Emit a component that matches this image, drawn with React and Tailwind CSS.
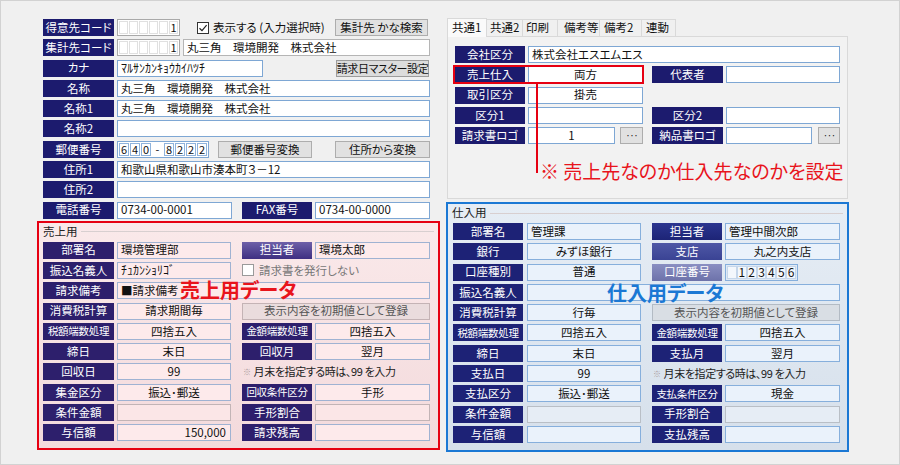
import React from "react";

const navy = "bg-[#1c1b6e]";
const purple = "bg-[#2d1f6c]";
const purpleGrad = "bg-gradient-to-b from-[#6e5fa8] to-[#3f2f82]";
const bNavy = "bg-[#1d2276]";
const bNavyGrad = "bg-gradient-to-b from-[#2b3590] to-[#1d2476]";
const bMidGrad = "bg-gradient-to-b from-[#4f58a6] to-[#3a4394]";
const bLightGrad = "bg-gradient-to-b from-[#8a8fc2] to-[#6d72aa]";

const pinkField = "bg-[#fdeaeb] border-[#9fb2d2]";
const pinkGray = "bg-[#fbe6e7] border-[#c2b4b6]";
const blueField = "bg-[#eaf2fb] border-[#86afdc]";
const blueGray = "bg-[#e6edf5] border-[#b9bfc6]";

function Label({ t, c = navy, w = "w-[71px]", ml = "", sm = false }) {
  return (
    <div
      className={`${w} ${ml} h-[17px] shrink-0 flex items-center justify-center text-white leading-none whitespace-nowrap ${
        sm ? "text-[10.5px] tracking-[-0.3px]" : "text-[11.5px]"
      } ${c}`}
    >
      {t}
    </div>
  );
}

function Field({ t = "", w, ml = "", align = "l", c = "bg-white border-[#7ea7d4]", size = "text-[11.5px]" }) {
  const a =
    align === "c"
      ? "justify-center"
      : align === "r"
      ? "justify-end pr-[4px]"
      : "justify-start pl-[3px]";
  return (
    <div
      className={`${w} ${ml} h-[17px] shrink-0 border flex items-center leading-none text-[#111] whitespace-nowrap ${size} ${a} ${c}`}
    >
      {t}
    </div>
  );
}

function Btn({ t, w, ml = "", c = "bg-[#e1e1e1] border-[#adadad] text-[#111]", size = "text-[11.5px]" }) {
  return (
    <div
      className={`${w} ${ml} h-[17px] shrink-0 border flex items-center justify-center leading-none whitespace-nowrap ${size} ${c}`}
    >
      {t}
    </div>
  );
}

function Row({ children }) {
  return <div className="flex items-center h-[17px]">{children}</div>;
}

function CodeBox({ ml = "" }) {
  return (
    <div className={`w-[63px] h-[17px] shrink-0 border border-[#a9a9a9] bg-white flex p-[1px] gap-[1px] ${ml}`}>
      {[0, 1, 2, 3, 4].map((i) => (
        <div key={i} className="flex-1 border border-[#e0e0e0]" />
      ))}
      <div className="flex-1 border border-[#e0e0e0] flex items-center justify-center text-[11px] leading-none">
        1
      </div>
    </div>
  );
}

function Digit({ d, c = "bg-white border-[#8fb3dc]", size = "text-[11px]" }) {
  return (
    <div className={`w-[10px] h-[13px] border flex items-center justify-center leading-none ${size} ${c}`}>
      {d}
    </div>
  );
}

function Check({ gray = false }) {
  return (
    <div
      className={`w-[12px] h-[12px] border bg-white flex items-center justify-center ${
        gray ? "border-[#9a9a9a]" : "border-[#333]"
      }`}
    >
      {!gray && (
        <svg width="10" height="10" viewBox="0 0 10 10">
          <path d="M1.5 5.2 L4 7.6 L8.6 2.2" fill="none" stroke="#222" strokeWidth="1.2" />
        </svg>
      )}
    </div>
  );
}

function Note() {
  return (
    <div className="ml-[12px] flex items-center text-[11px] tracking-[-0.4px] leading-none text-[#222] whitespace-nowrap">
      <span className="text-[8px] text-[#a89a9a] mr-[3px]">※</span>
      月末を指定する時は、99 を入力
    </div>
  );
}

function GroupTitle({ t }) {
  return (
    <div className="h-[16px] mt-[1px] flex items-center pl-[4px] text-[11.5px] leading-none text-[#222]">
      <span>{t}</span>
      <div className="flex-1 h-px bg-[#d8cfd0] ml-[3px] mr-[4px]" />
    </div>
  );
}

export default function App() {
  return (
    <div className="w-[900px] h-[465px] bg-[#f0f0f0] border border-[#d2d2d2] flex items-start font-['Noto_Sans_CJK_JP','Noto_Sans',sans-serif] [font-feature-settings:'palt'] text-[#111] overflow-hidden">
      {/* left column */}
      <div className="ml-[36px] w-[403px] flex flex-col">
        <div className="mt-[18px] ml-[6px] w-[387px] flex flex-col gap-[3.3px]">
          <Row>
            <Label t="得意先コード" />
            <CodeBox ml="ml-[3px]" />
            <div className="ml-[17px] flex items-center gap-[4px] text-[11.5px] leading-none">
              <Check />
              <span>表示する (入力選択時)</span>
            </div>
            <Btn t="集計先 かな検索" w="w-[93px]" ml="ml-auto mr-[2px]" />
          </Row>
          <Row>
            <Label t="集計先コード" />
            <CodeBox ml="ml-[3px]" />
            <Field t="丸三角　環境開発　株式会社" w="w-[247px]" ml="ml-[3px]" c="bg-white border-[#b5b5b5]" />
          </Row>
          <Row>
            <Label t="カナ" />
            <Field t="ﾏﾙｻﾝｶﾝｷｮｳｶｲﾊﾂﾁ" w="w-[146px]" ml="ml-[3px]" size="text-[12px]" />
            <Btn
              t="請求日マスター設定"
              w="w-[93px]"
              ml="ml-auto mr-[1px]"
              c="bg-[#dcdcdc] border-[#9c9c9c] text-[#111] tracking-[-0.4px]"
              size="text-[11px]"
            />
          </Row>
          <Row>
            <Label t="名称" />
            <Field t="丸三角　環境開発　株式会社" w="w-[313px]" ml="ml-[3px]" />
          </Row>
          <Row>
            <Label t="名称1" />
            <Field t="丸三角　環境開発　株式会社" w="w-[313px]" ml="ml-[3px]" />
          </Row>
          <Row>
            <Label t="名称2" />
            <Field w="w-[313px]" ml="ml-[3px]" />
          </Row>
          <Row>
            <Label t="郵便番号" />
            <div className="ml-[3px] w-[92px] h-[17px] shrink-0 border border-[#7ea7d4] bg-white flex items-center px-[1px] gap-[1px]">
              <Digit d="6" />
              <Digit d="4" />
              <Digit d="0" />
              <div className="w-[11px] text-center text-[11px] leading-none">-</div>
              <Digit d="8" />
              <Digit d="2" />
              <Digit d="2" />
              <Digit d="2" />
            </div>
            <Btn t="郵便番号変換" w="w-[94px]" ml="ml-[9px]" />
            <Btn t="住所から変換" w="w-[95px]" ml="ml-auto" />
          </Row>
          <Row>
            <Label t="住所1" />
            <Field t="和歌山県和歌山市湊本町３－12" w="w-[313px]" ml="ml-[3px]" />
          </Row>
          <Row>
            <Label t="住所2" />
            <Field w="w-[313px]" ml="ml-[3px]" />
          </Row>
          <Row>
            <Label t="電話番号" />
            <Field t="0734-00-0001" w="w-[115px]" ml="ml-[3px]" />
            <Label t="FAX番号" w="w-[70px]" ml="ml-[10px]" />
            <Field t="0734-00-0000" w="w-[115px]" ml="ml-[3px]" />
          </Row>
        </div>

        {/* 売上用 */}
        <div className="relative mt-[2px] h-[229px] border-2 border-[#e60012] bg-gradient-to-b from-[#fae9ea] to-[#f3dadc]">
          <GroupTitle t="売上用" />
          <div className="mt-[2px] pl-[4px] flex flex-col gap-[3.3px]">
            <Row>
              <Label t="部署名" c={purple} />
              <Field t="環境管理部" w="w-[114px]" ml="ml-[3px]" c={pinkField} />
              <Label t="担当者" w="w-[70px]" ml="ml-[11px]" c={purpleGrad} />
              <Field t="環境太郎" w="w-[115px]" ml="ml-[3px]" c={pinkField} />
            </Row>
            <Row>
              <Label t="振込名義人" c={purple} />
              <Field t="ﾁｭｶﾝｼｮﾘｺﾞ" w="w-[114px]" ml="ml-[3px]" c={pinkField} size="text-[12px]" />
              <div className="ml-[11px] flex items-center gap-[5px] text-[11.5px] leading-none text-[#777]">
                <Check gray />
                <span>請求書を発行しない</span>
              </div>
            </Row>
            <Row>
              <Label t="請求備考" c={purple} />
              <Field t="■請求備考" w="w-[313px]" ml="ml-[3px]" c={pinkField} />
            </Row>
            <Row>
              <Label t="消費税計算" c={purple} />
              <Field t="請求期間毎" align="c" w="w-[114px]" ml="ml-[3px]" c={pinkField} />
              <Btn
                t="表示内容を初期値として登録"
                w="w-[188px]"
                ml="ml-[11px]"
                c="bg-[#eadcdd] border-[#c4b3b5] text-[#555]"
              />
            </Row>
            <Row>
              <Label t="税額端数処理" c={purple} sm />
              <Field t="四捨五入" align="c" w="w-[114px]" ml="ml-[3px]" c={pinkField} />
              <Label t="金額端数処理" w="w-[70px]" ml="ml-[11px]" c={purple} sm />
              <Field t="四捨五入" align="c" w="w-[115px]" ml="ml-[3px]" c={pinkField} />
            </Row>
            <Row>
              <Label t="締日" c={purple} />
              <Field t="末日" align="c" w="w-[114px]" ml="ml-[3px]" c={pinkField} />
              <Label t="回収月" w="w-[70px]" ml="ml-[11px]" c={purple} />
              <Field t="翌月" align="c" w="w-[115px]" ml="ml-[3px]" c={pinkField} />
            </Row>
            <Row>
              <Label t="回収日" c={purple} />
              <Field t="99" align="c" w="w-[114px]" ml="ml-[3px]" c={pinkField} />
              <Note />
            </Row>
            <Row>
              <Label t="集金区分" c={purple} />
              <Field t="振込･郵送" align="c" w="w-[114px]" ml="ml-[3px]" c={pinkField} />
              <Label t="回収条件区分" w="w-[70px]" ml="ml-[11px]" c={purple} sm />
              <Field t="手形" align="c" w="w-[115px]" ml="ml-[3px]" c={pinkField} />
            </Row>
            <Row>
              <Label t="条件金額" c={purple} />
              <Field w="w-[114px]" ml="ml-[3px]" c={pinkGray} />
              <Label t="手形割合" w="w-[70px]" ml="ml-[11px]" c={purple} />
              <Field w="w-[115px]" ml="ml-[3px]" c={pinkGray} />
            </Row>
            <Row>
              <Label t="与信額" c={purple} />
              <Field t="150,000" align="r" w="w-[114px]" ml="ml-[3px]" c={pinkField} />
              <Label t="請求残高" w="w-[70px]" ml="ml-[11px]" c={purple} />
              <Field w="w-[115px]" ml="ml-[3px]" c={pinkField} />
            </Row>
          </div>
          <div className="absolute left-[141px] top-[57px] text-[20px] font-bold leading-none text-[#e8141c]">
            売上用データ
          </div>
        </div>
      </div>

      {/* right column */}
      <div className="ml-[6px] w-[403px] flex flex-col">
        <div className="mt-[16px] ml-[1px] h-[19px] flex items-end text-[11.5px] leading-none">
          <div className="w-[40px] h-[19px] bg-[#fafafa] border border-b-0 border-[#d9d9d9] flex items-center pl-[4px] relative z-10 -mb-px">
            共通1
          </div>
          <div className="w-[36px] h-[17px] border border-l-0 border-b-0 border-[#d9d9d9] flex items-center pl-[3px]">
            共通2
          </div>
          <div className="w-[35px] h-[17px] border border-l-0 border-b-0 border-[#d9d9d9] flex items-center pl-[3px]">
            印刷
          </div>
          <div className="w-[42px] h-[17px] border border-l-0 border-b-0 border-[#d9d9d9] flex items-center pl-[6px]">
            備考等
          </div>
          <div className="w-[42px] h-[17px] border border-l-0 border-b-0 border-[#d9d9d9] flex items-center pl-[4px]">
            備考2
          </div>
          <div className="w-[34px] h-[17px] border border-l-0 border-b-0 border-[#d9d9d9] flex items-center pl-[4px]">
            連動
          </div>
        </div>
        <div className="relative mx-[1px] h-[163px] border border-[#d9d9d9] bg-[#f2f2f2] pt-[9px] pl-[7px]">
          <div className="flex flex-col gap-[3.3px]">
            <Row>
              <Label t="会社区分" w="w-[70px]" />
              <Field t="株式会社エスエムエス" w="w-[312px]" ml="ml-[3px]" />
            </Row>
            <Row>
              <Label t="売上仕入" w="w-[70px]" />
              <Field t="両方" align="c" w="w-[115px]" ml="ml-[3px]" />
              <Label t="代表者" ml="ml-[9px]" />
              <Field w="w-[114px]" ml="ml-[3px]" />
            </Row>
            <Row>
              <Label t="取引区分" w="w-[70px]" />
              <Field t="掛売" align="c" w="w-[115px]" ml="ml-[3px]" />
            </Row>
            <Row>
              <Label t="区分1" w="w-[70px]" />
              <Field w="w-[115px]" ml="ml-[3px]" />
              <Label t="区分2" ml="ml-[9px]" />
              <Field w="w-[114px]" ml="ml-[3px]" />
            </Row>
            <Row>
              <Label t="請求書ロゴ" w="w-[70px]" />
              <Field t="1" align="c" w="w-[87px]" ml="ml-[3px]" />
              <Btn t="···" w="w-[23px]" ml="ml-[5px]" size="text-[9px] tracking-[-1px]" />
              <Label t="納品書ロゴ" ml="ml-[9px]" />
              <Field w="w-[86px]" ml="ml-[3px]" />
              <Btn t="···" w="w-[22px]" ml="ml-[6px]" size="text-[9px] tracking-[-1px]" />
            </Row>
          </div>
          <div className="mt-[17px] ml-[85px] text-[19px] leading-none text-[#e8141c] whitespace-nowrap">
            ※ 売上先なのか仕入先なのかを設定
          </div>
          <div className="absolute left-[5px] top-[28px] w-[191px] h-[19px] border-2 border-[#e60012]" />
          <div className="absolute left-[88px] top-[47px] w-[2px] h-[89px] bg-[#e60012]" />
        </div>

        {/* 仕入用 */}
        <div className="relative mt-[3px] h-[250px] border-2 border-[#1b78d4] bg-gradient-to-b from-[#e6edf5] to-[#d6e0eb]">
          <GroupTitle t="仕入用" />
          <div className="mt-[2px] pl-[5px] flex flex-col gap-[3.3px]">
            <Row>
              <Label t="部署名" w="w-[70px]" c={bNavy} />
              <Field t="管理課" w="w-[114px]" ml="ml-[4px]" c={blueField} />
              <Label t="担当者" w="w-[70px]" ml="ml-[11px]" c={bNavyGrad} />
              <Field t="管理中間次郎" w="w-[115px]" ml="ml-[3px]" c={blueField} />
            </Row>
            <Row>
              <Label t="銀行" w="w-[70px]" c={bNavy} />
              <Field t="みずほ銀行" align="c" w="w-[114px]" ml="ml-[4px]" c={blueField} />
              <Label t="支店" w="w-[70px]" ml="ml-[11px]" c={bMidGrad} />
              <Field t="丸之内支店" align="c" w="w-[115px]" ml="ml-[3px]" c={blueField} />
            </Row>
            <Row>
              <Label t="口座種別" w="w-[70px]" c={bNavy} />
              <Field t="普通" align="c" w="w-[114px]" ml="ml-[4px]" c={blueField} />
              <Label t="口座番号" w="w-[70px]" ml="ml-[11px]" c={bLightGrad} />
              <div className="ml-[3px] w-[73px] h-[17px] shrink-0 border border-[#86afdc] bg-[#dfe9f5] flex items-center px-[1px]">
                <Digit d="" c="bg-[#f3f7fc] border-[#c5d6ea]" size="text-[12px]" />
                <Digit d="1" c="bg-[#f3f7fc] border-[#c5d6ea]" size="text-[12px]" />
                <Digit d="2" c="bg-[#f3f7fc] border-[#c5d6ea]" size="text-[12px]" />
                <Digit d="3" c="bg-[#f3f7fc] border-[#c5d6ea]" size="text-[12px]" />
                <Digit d="4" c="bg-[#f3f7fc] border-[#c5d6ea]" size="text-[12px]" />
                <Digit d="5" c="bg-[#f3f7fc] border-[#c5d6ea]" size="text-[12px]" />
                <Digit d="6" c="bg-[#f3f7fc] border-[#c5d6ea]" size="text-[12px]" />
              </div>
            </Row>
            <Row>
              <Label t="振込名義人" w="w-[70px]" c={bNavy} />
              <Field w="w-[313px]" ml="ml-[4px]" c={blueField} />
            </Row>
            <Row>
              <Label t="消費税計算" w="w-[70px]" c={bNavy} />
              <Field t="行毎" align="c" w="w-[114px]" ml="ml-[4px]" c={blueField} />
              <Btn
                t="表示内容を初期値として登録"
                w="w-[188px]"
                ml="ml-[11px]"
                c="bg-[#d9dee4] border-[#b3bbc4] text-[#555]"
              />
            </Row>
            <Row>
              <Label t="税額端数処理" w="w-[70px]" c={bNavy} sm />
              <Field t="四捨五入" align="c" w="w-[114px]" ml="ml-[4px]" c={blueField} />
              <Label t="金額端数処理" w="w-[70px]" ml="ml-[11px]" c={bNavy} sm />
              <Field t="四捨五入" align="c" w="w-[115px]" ml="ml-[3px]" c={blueField} />
            </Row>
            <Row>
              <Label t="締日" w="w-[70px]" c={bNavy} />
              <Field t="末日" align="c" w="w-[114px]" ml="ml-[4px]" c={blueField} />
              <Label t="支払月" w="w-[70px]" ml="ml-[11px]" c={bNavy} />
              <Field t="翌月" align="c" w="w-[115px]" ml="ml-[3px]" c={blueField} />
            </Row>
            <Row>
              <Label t="支払日" w="w-[70px]" c={bNavy} />
              <Field t="99" align="c" w="w-[114px]" ml="ml-[4px]" c={blueField} />
              <Note />
            </Row>
            <Row>
              <Label t="支払区分" w="w-[70px]" c={bNavy} />
              <Field t="振込･郵送" align="c" w="w-[114px]" ml="ml-[4px]" c={blueField} />
              <Label t="支払条件区分" w="w-[70px]" ml="ml-[11px]" c={bNavy} sm />
              <Field t="現金" align="c" w="w-[115px]" ml="ml-[3px]" c={blueField} />
            </Row>
            <Row>
              <Label t="条件金額" w="w-[70px]" c={bNavy} />
              <Field w="w-[114px]" ml="ml-[4px]" c={blueGray} />
              <Label t="手形割合" w="w-[70px]" ml="ml-[11px]" c={bNavy} />
              <Field w="w-[115px]" ml="ml-[3px]" c={blueGray} />
            </Row>
            <Row>
              <Label t="与信額" w="w-[70px]" c={bNavy} />
              <Field w="w-[114px]" ml="ml-[4px]" c={blueField} />
              <Label t="支払残高" w="w-[70px]" ml="ml-[11px]" c={bNavy} />
              <Field w="w-[115px]" ml="ml-[3px]" c={blueField} />
            </Row>
          </div>
          <div className="absolute left-[159px] top-[79px] text-[20px] font-bold leading-none text-[#1b78d4]">
            仕入用データ
          </div>
        </div>
      </div>
    </div>
  );
}
